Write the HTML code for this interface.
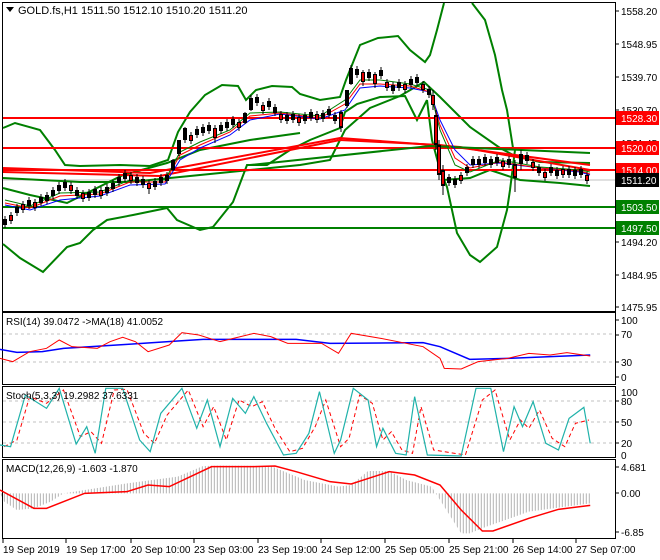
<!DOCTYPE html>
<html><head><meta charset="utf-8"><style>
body{margin:0;background:#fff;}
svg{display:block;font-family:"Liberation Sans",sans-serif;}
.ax{font-size:10px;fill:#000;}
</style></head><body>
<svg width="660" height="560" viewBox="0 0 660 560" xmlns="http://www.w3.org/2000/svg">
<defs>
<pattern id="hist" width="7.09" height="10" patternUnits="userSpaceOnUse"><rect x="2" y="0" width="2.4" height="10" fill="#b4b4b4"/></pattern>
</defs>
<rect width="660" height="560" fill="#fff"/>
<g fill="none" stroke="#000" stroke-width="1">
<rect x="2.5" y="2.5" width="613" height="309"/>
<rect x="2.5" y="312.5" width="613" height="72"/>
<rect x="2.5" y="386.5" width="613" height="71"/>
<rect x="2.5" y="459.5" width="613" height="79"/>
</g>

<g>
<line x1="3" y1="180" x2="615" y2="180" stroke="#c0c0c0"/>
<polyline fill="none" stroke="#008000" stroke-width="2" points="3,128 15,123 40,130 55,150 65,165 80,166 120,165 150,166 168,160 178,132 190,112 205,95 222,85 238,86 246,100 256,90 272,86 292,87 300,94 320,100 340,97 346,80 360,45 378,38 398,36 410,50 425,62 430,55 437,30 444,3"/>
<polyline fill="none" stroke="#008000" stroke-width="2" points="472,3 485,20 495,55 502,90 507,110 513,148"/>
<polyline fill="none" stroke="#008000" stroke-width="2" points="3,178 80,182 130,182 170,178 200,175 250,170 300,165 330,160 345,130 370,108 400,96 424,82 440,97 470,127 500,148 515,156 540,162 590,163"/>
<polyline fill="none" stroke="#008000" stroke-width="2" points="3,244 20,258 43,272 67,247 80,243 93,230 107,220 133,215 167,208 177,220 200,230 213,227 233,202 247,165 267,165 290,150 310,140 340,128 345,112 357,104 380,97 405,96 417,120 427,100"/>
<polyline fill="none" stroke="#008000" stroke-width="2" points="427,100 432,140 440,170 447,187 457,233 470,255 480,262 497,247 507,210 510,190 515,150"/>
<polyline fill="none" stroke="#008000" stroke-width="2" points="443,180 470,178 490,170 520,180 560,183 590,186"/>
<polyline fill="none" stroke="#008000" stroke-width="2" points="3,188 30,195 67,203 123,175 167,163 200,150 250,140 300,133"/>
<g stroke-width="2">
<line x1="3" y1="118" x2="615" y2="118" stroke="#ff0000"/>
<line x1="3" y1="148" x2="615" y2="148" stroke="#ff0000"/>
<line x1="3" y1="170" x2="615" y2="170" stroke="#ff0000"/>
<line x1="3" y1="207" x2="615" y2="207" stroke="#008000"/>
<line x1="3" y1="228" x2="615" y2="228" stroke="#008000"/>
</g>
<polyline fill="none" stroke="#ff0000" stroke-width="2" points="3,168 150,173 340,138 460,147 590,170"/>
<polyline fill="none" stroke="#ff0000" stroke-width="2" points="3,172 160,176 340,140 440,145 590,165"/>
<polyline fill="none" stroke="#008000" stroke-width="2" points="250,165 430,146 590,153"/>
<polyline fill="none" stroke="#0000ff" stroke-width="1" points="5,205 30,210 60,200 100,196 130,185 165,184 180,160 200,148 230,135 250,120 280,114 320,119 345,110 360,88 380,86 410,88 430,92 440,120 455,150 470,165 500,163 540,168 580,172 590,175"/>
<polyline fill="none" stroke="#ff0000" stroke-width="1" points="5,203 30,208 60,196 100,194 130,182 165,182 180,155 200,145 230,132 250,116 280,113 320,118 345,104 360,84 380,84 410,86 430,92 440,125 455,158 470,168 500,162 540,168 580,171 590,174"/>
<polyline fill="none" stroke="#008000" stroke-width="1" points="5,200 30,206 60,193 100,192 130,180 165,180 180,152 200,142 230,130 250,113 280,112 320,116 345,100 360,80 380,80 410,84 430,90 440,130 455,165 470,172 500,160 540,167 580,170 590,172"/>
<path fill="none" stroke="#000" stroke-width="1" d="M5 216v12M11 212v12M17 204v12M23 201v12M29 197v12M35 199v12M41 194v12M47 192v12M53 187v12M59 182v12M65 179v12M71 182v12M77 187v12M83 190v12M89 189v12M95 186v12M101 187v12M107 184v12M113 180v12M119 174v12M125 170v12M131 172v12M137 174v12M143 176v12M149 180v14M155 178v12M161 174v12M167 172v12M173 159v12M179 140v16M185 127v16M191 132v12M197 126v12M203 124v12M209 122v12M215 125v18M221 122v12M227 119v12M233 116v12M239 119v12M245 112v12M251 95v16M257 94v12M263 102v12M269 98v12M275 104v12M281 111v12M287 112v12M293 111v12M299 114v12M305 112v12M311 109v12M317 111v12M323 110v12M329 106v12M335 112v12M341 110v22M347 90v18M351 65v20M357 66v12M363 70v16M369 69v12M375 72v16M381 67v12M387 79v12M393 82v12M399 79v12M405 81v12M411 76v12M417 74v12M423 81v12M429 86v12M433 90v20M436 110v40M439 140v40M443 165v30M449 174v12M455 176v12M461 172v12M467 164v12M473 156v12M479 156v12M485 154v12M491 156v12M497 154v12M503 158v12M509 156v12M515 160v32M521 150v20M527 152v12M533 159v12M539 164v12M545 169v12M551 164v12M557 167v12M563 166v12M569 166v12M575 167v12M581 166v12M587 172v12"/>
<path fill="none" stroke="#000" stroke-width="4" d="M5 219v6M11 215v6M17 207v6M23 204v6M29 200v6M35 202v6M41 197v6M47 195v6M53 190v6M59 185v6M65 182v6M71 185v6M77 190v6M83 193v6M89 192v6M95 189v6M101 190v6M107 187v6M113 183v6M119 177v6M125 173v6M131 175v6M137 177v6M143 179v6M149 183v6M155 181v6M161 177v6M167 175v6M173 160v10M179 140v14M185 128v12M191 135v6M197 129v6M203 127v6M209 125v6M215 128v10M221 125v6M227 122v6M233 119v6M239 122v6M245 113v10M251 98v12M257 97v6M263 105v6M269 101v6M275 107v6M281 114v6M287 115v6M293 114v6M299 117v6M305 115v6M311 112v6M317 114v6M323 113v6M329 109v6M335 115v6M341 112v16M347 90v16M351 68v16M357 69v6M363 72v10M369 72v6M375 74v10M381 70v6M387 82v6M393 85v6M399 82v6M405 84v6M411 79v6M417 77v6M423 84v6M429 89v6M433 95v10M436 115v30M439 145v30M443 170v16M449 177v6M455 179v6M461 175v6M467 167v6M473 159v6M479 159v6M485 157v6M491 159v6M497 157v6M503 161v6M509 159v6M515 164v14M521 154v10M527 155v6M533 162v6M539 167v6M545 172v6M551 167v6M557 170v6M563 169v6M569 169v6M575 170v6M581 169v6M587 175v6"/>
<path fill="none" stroke="#e00000" stroke-width="2" d="M11 216v4M23 205v4M35 203v4M71 186v4M83 194v4M101 191v4M131 176v4M149 184v4M191 136v4M215 129v8M239 123v4M263 106v4M281 115v4M299 118v4M317 115v4M341 114v12M363 73v8M375 75v8M387 83v4M405 85v4M423 85v4M433 96v8M436 117v26M439 147v26M443 172v12M461 176v4M503 162v4M515 166v10M533 163v4M545 173v4M563 170v4M587 176v4"/>
</g>

<path d="M6 7h8l-4 5z" fill="#000"/>
<text x="18" y="14" font-size="11" fill="#000">GOLD.fs,H1  1511.50 1512.10 1510.20 1511.20</text>

<g class="ax">
<text x="621" y="15">1558.20</text>
<text x="621" y="48">1548.95</text>
<text x="621" y="81">1539.70</text>
<text x="621" y="114">1530.70</text>
<text x="621" y="147">1521.45</text>
<text x="621" y="246">1494.20</text>
<text x="621" y="279">1484.95</text>
<text x="621" y="311">1475.95</text>
</g>
<g stroke="#000"><path d="M616 11h3M616 44h3M616 77h3M616 110h3M616 143h3M616 242h3M616 275h3M616 307h3M616 320h3M616 335h3M616 362h3M616 377h3M616 401h3M616 422h3M616 443h3M616 467h3M616 493h3M616 532h3"/></g>
<g class="ax" style="fill:#fff">
<rect x="616" y="111" width="43" height="14" fill="#ff0000"/><text x="621" y="122" style="fill:#fff">1528.30</text>
<rect x="616" y="141" width="43" height="14" fill="#ff0000"/><text x="621" y="152" style="fill:#fff">1520.00</text>
<rect x="616" y="163" width="43" height="14" fill="#ff0000"/><text x="621" y="174" style="fill:#fff">1514.00</text>
<rect x="616" y="173" width="43" height="14" fill="#000"/><text x="621" y="184" style="fill:#fff">1511.20</text>
<rect x="616" y="200" width="43" height="14" fill="#008000"/><text x="621" y="211" style="fill:#fff">1503.50</text>
<rect x="616" y="221" width="43" height="14" fill="#008000"/><text x="621" y="232" style="fill:#fff">1497.50</text>
</g>

<g stroke="#c0c0c0" stroke-dasharray="3,3"><line x1="3" y1="334" x2="615" y2="334"/><line x1="3" y1="362" x2="615" y2="362"/></g>
<g stroke="#c0c0c0" stroke-dasharray="3,3"><line x1="3" y1="401" x2="615" y2="401"/><line x1="3" y1="422" x2="615" y2="422"/><line x1="3" y1="443" x2="615" y2="443"/></g>
<g transform="translate(0,300) scale(0.4231,0.33333)" fill="none">
<polyline vector-effect="non-scaling-stroke" stroke="#0000ff" stroke-width="1.5" points="0,148 40,157 100,155 150,145 300,133 420,123 480,118 700,118 780,130 1000,128 1040,140 1110,178 1200,175 1395,165"/>
<polyline vector-effect="non-scaling-stroke" stroke="#ff0000" stroke-width="1" points="0,175 30,185 70,155 110,145 140,120 170,140 230,145 260,125 290,112 320,125 350,155 400,135 430,98 470,105 520,125 600,100 640,110 680,130 760,130 800,160 830,100 900,115 1000,140 1040,175 1050,205 1090,207 1130,185 1200,175 1250,160 1300,165 1340,158 1395,168"/>
<polyline vector-effect="non-scaling-stroke" stroke="#ff0000" stroke-dasharray="4,3" points="10,440 40,420 70,290 110,310 150,270 190,410 215,395 240,430 270,270 300,268 340,400 365,430 395,345 445,270 480,380 505,320 535,420 565,300 595,320 620,305 650,385 685,455 715,445 745,380 770,300 805,440 825,415 850,285 880,310 905,420 925,395 950,450 975,460 995,320 1025,450 1100,465 1140,300 1170,270 1205,420 1230,360 1250,385 1275,330 1305,415 1335,440 1360,370 1392,360"/>
<polyline vector-effect="non-scaling-stroke" stroke="#20b2aa" stroke-width="1.2" points="0,435 25,440 60,285 110,325 140,265 180,432 205,380 225,460 250,265 290,265 330,420 355,455 380,340 430,265 465,385 490,300 520,440 550,295 580,340 600,290 630,370 670,465 700,460 730,400 755,275 790,460 805,420 835,265 870,300 890,440 905,385 935,460 960,465 980,290 1010,465 1090,468 1125,265 1160,265 1190,455 1215,320 1235,380 1260,305 1290,430 1320,450 1345,355 1380,322 1395,430"/>
<polygon fill="url(#hist)" points="0,580 10,605 40,630 80,625 120,605 150,580 300,550 420,530 480,498 520,497 640,498 720,540 800,560 830,555 870,513 920,513 960,540 1020,560 1030,580 1045,610 1060,640 1090,700 1110,700 1150,680 1250,635 1395,610 1395,580"/>
<polyline vector-effect="non-scaling-stroke" stroke="#ff0000" stroke-width="1.5" points="0,570 80,625 110,625 200,580 300,575 350,555 400,560 500,500 600,500 650,498 700,515 780,545 830,552 920,515 980,525 1040,555 1090,630 1140,693 1165,693 1250,655 1320,628 1395,616"/>
</g>
<g font-size="10" fill="#000">
<text x="6" y="325">RSI(14) 39.0472  -&gt;MA(18) 41.0052</text>
<text x="6" y="399">Stoch(5,3,3) 19.2982 37.6331</text>
<text x="6" y="472">MACD(12,26,9) -1.603 -1.870</text>
</g>
<g class="ax">
<text x="621" y="324">100</text><text x="621" y="338">70</text><text x="621" y="366">30</text><text x="621" y="381">0</text>
<text x="621" y="396">100</text><text x="621" y="405">80</text><text x="621" y="426">50</text><text x="621" y="447">20</text><text x="621" y="459">0</text>
<text x="621" y="471">4.681</text><text x="621" y="497">0.00</text><text x="621" y="536">-6.85</text>
</g>
<g stroke="#000"><path d="M3 539v4M66 539v4M131 539v4M194 539v4M258 539v4M321 539v4M385 539v4M449 539v4M513 539v4M576 539v4"/></g>
<g class="ax">
<text x="3" y="553">19 Sep 2019</text><text x="66" y="553">19 Sep 17:00</text><text x="131" y="553">20 Sep 10:00</text><text x="194" y="553">23 Sep 03:00</text><text x="258" y="553">23 Sep 19:00</text><text x="321" y="553">24 Sep 12:00</text><text x="385" y="553">25 Sep 05:00</text><text x="449" y="553">25 Sep 21:00</text><text x="513" y="553">26 Sep 14:00</text><text x="576" y="553">27 Sep 07:00</text>
</g>
</svg>
</body></html>
